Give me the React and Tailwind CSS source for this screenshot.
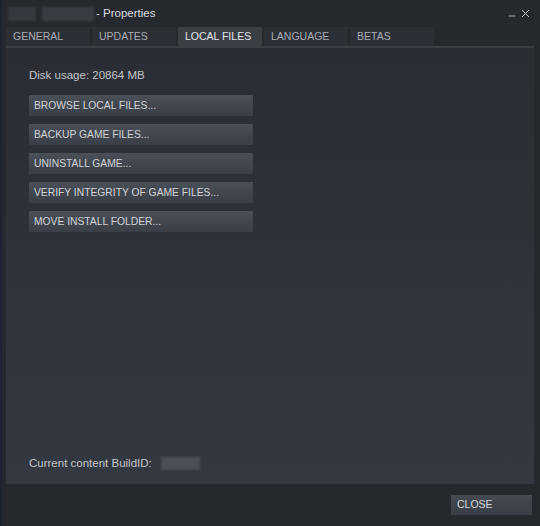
import React from "react";
import { X, Minus } from "lucide-react";

const tabs = ["General", "Updates", "Local Files", "Language", "Betas"];

const actions = [
  "Browse local files...",
  "Backup game files...",
  "Uninstall game...",
  "Verify integrity of game files...",
  "Move install folder...",
];

const Tab = ({ title, active }) => (
  <div
    className={`h-[19px] w-[84px] flex items-center pl-[7px] text-[10.5px] uppercase ${
      active ? "bg-[#3a3e45] text-[#e4e6e8]" : "bg-[#2c2f35] text-[#a9adb3]"
    }`}
  >
    {title}
  </div>
);

const ActionButton = ({ title }) => (
  <button className="w-[224px] h-[21px] flex items-center pl-[5px] text-[10.3px] uppercase text-[#d2d4d7] bg-gradient-to-b from-[#4a4f58] to-[#3a3e46] rounded-[1px] cursor-pointer">
    {title}
  </button>
);

export default function App() {
  return (
    <div
      className="w-[540px] h-[526px] bg-[#25282d] flex flex-col overflow-hidden border-l-[2px] border-[#1c2233]"
      style={{ fontFamily: '"Liberation Sans", Arial, sans-serif' }}
    >
      {/* title bar */}
      <div className="h-[27px] flex items-center pl-[6px] pr-[8px]">
        <div className="w-[28px] h-[14px] bg-[#34383f] blur-[1px]" />
        <div className="w-[52px] h-[14px] bg-[#383c43] ml-[6px] blur-[1px]" />
        <span className="ml-[2px] text-[11.5px] text-[#dcdee0]">- Properties</span>
        <div className="ml-auto flex items-center gap-[2px] text-[#c6c9cd]">
          <Minus size={10} strokeWidth={2} className="mt-[5px]" />
          <X size={13} strokeWidth={1.75} />
        </div>
      </div>

      {/* tabs */}
      <div className="flex gap-[2px] pl-[4px]">
        {tabs.map((t) => (
          <Tab key={t} title={t} active={t === "Local Files"} />
        ))}
      </div>
      <div className="h-[2px] bg-[#3a3e45] ml-[4px] mr-[6px]" />

      {/* content panel */}
      <div className="flex-1 ml-[4px] mr-[6px] bg-gradient-to-b from-[#2a2d33] to-[#343841] flex flex-col pl-[23px] pt-[19px] pb-[12px]">
        <div className="text-[11.5px] text-[#c3c6ca]">Disk usage: 20864 MB</div>
        <div className="flex flex-col gap-[8px] mt-[11px]">
          {actions.map((a) => (
            <ActionButton key={a} title={a} />
          ))}
        </div>
        <div className="mt-auto flex items-center text-[11.5px] text-[#c3c6ca]">
          Current content BuildID:
          <div className="w-[39px] h-[13px] bg-[#4a4e56] ml-[9px] blur-[1px]" />
        </div>
      </div>

      {/* footer */}
      <div className="h-[42px] flex items-center justify-end pr-[8px]">
        <button className="w-[81px] h-[20px] flex items-center pl-[6px] text-[10.5px] text-[#d6d8db] bg-gradient-to-b from-[#454a53] to-[#3a3e46] cursor-pointer">
          CLOSE
        </button>
      </div>
    </div>
  );
}
